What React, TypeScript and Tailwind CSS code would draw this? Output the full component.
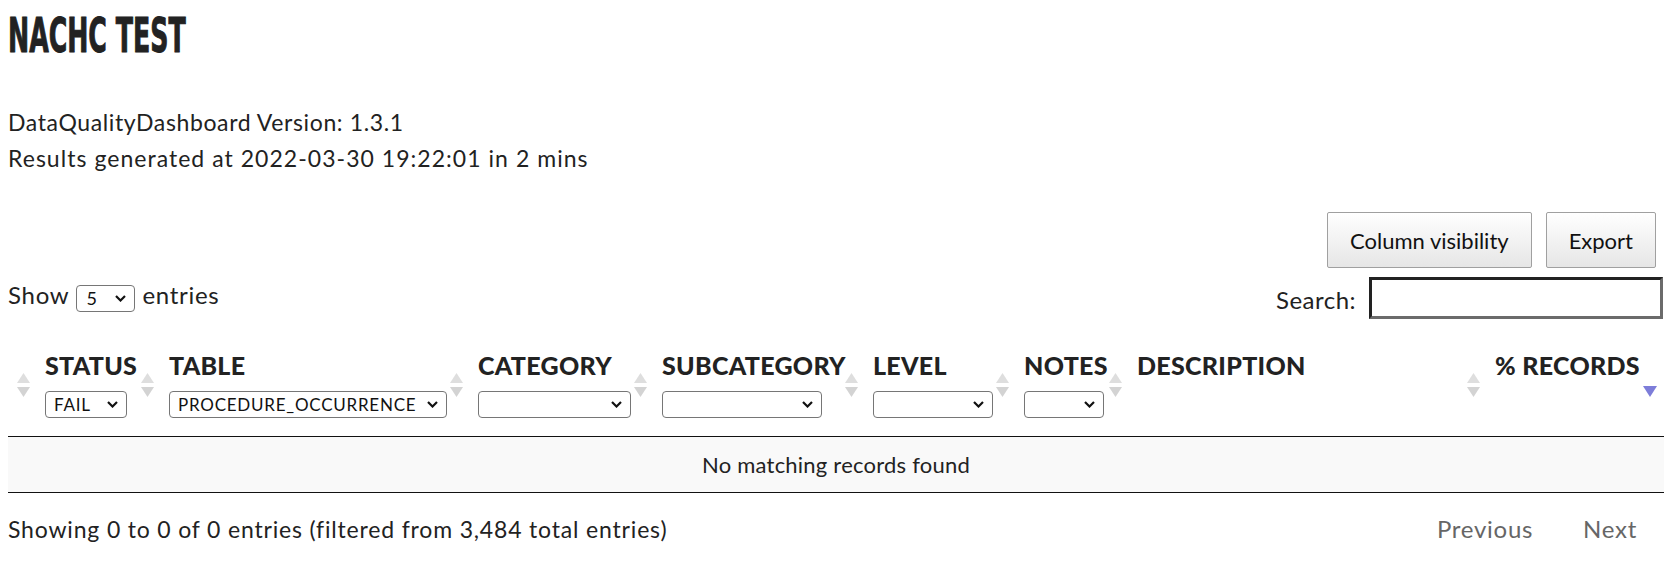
import React from 'react';

type Col = {
  key: string;
  cls: string;
  title?: string;
  select?: { cls: string; value?: string };
  sorted?: boolean;
};

const cols: Col[] = [
  { key: 'ctl', cls: 'w-[27px]' },
  { key: 'status', cls: 'w-[124px]', title: 'STATUS', select: { cls: 'w-[82px]', value: 'FAIL' } },
  { key: 'table', cls: 'w-[309px]', title: 'TABLE', select: { cls: 'w-[278px]', value: 'PROCEDURE_OCCURRENCE' } },
  { key: 'category', cls: 'w-[184px]', title: 'CATEGORY', select: { cls: 'w-[153px]' } },
  { key: 'subcategory', cls: 'w-[211px]', title: 'SUBCATEGORY', select: { cls: 'w-[160px]' } },
  { key: 'level', cls: 'w-[151px]', title: 'LEVEL', select: { cls: 'w-[120px]' } },
  { key: 'notes', cls: 'w-[113px]', title: 'NOTES', select: { cls: 'w-[80px]' } },
  { key: 'description', cls: 'w-[358px]', title: 'DESCRIPTION' },
  { key: 'records', cls: 'w-[179px]', title: '% RECORDS', sorted: true },
];

function SortBoth() {
  return (
    <svg width="13" height="24" viewBox="0 0 13 24" className="absolute right-[5px] top-[33px]">
      <path d="M6.5 0 L13 10 L0 10 Z" fill="#dedede" />
      <path d="M0 14 L13 14 L6.5 24 Z" fill="#d3d3d3" />
    </svg>
  );
}

function SortDesc() {
  return (
    <svg width="14" height="11" viewBox="0 0 14 11" className="absolute right-[7px] top-[46px]">
      <path d="M0 0 L14 0 L7 11 Z" fill="#7d7dd9" />
    </svg>
  );
}

function Chevron() {
  return (
    <svg width="11" height="7" viewBox="0 0 11 7" className="pointer-events-none absolute right-[9px] top-[10px]">
      <path d="M1 1 L5.5 5.5 L10 1" stroke="#111" strokeWidth="2.2" fill="none" />
    </svg>
  );
}

function FilterSelect({ cls, value }: { cls: string; value?: string }) {
  return (
    <div className={`relative ${cls}`}>
      <select
        defaultValue={value ?? ''}
        className="block h-[27px] w-full appearance-none rounded-[4px] border border-[#767676] bg-white pl-[8px] pr-[22px] text-[17px] font-normal leading-[25px] tracking-[0.045em] text-[#111]"
      >
        <option value="">{''}</option>
        {value && <option value={value}>{value}</option>}
      </select>
      <Chevron />
    </div>
  );
}

export default function App() {
  return (
    <div className="min-h-screen bg-white px-2 font-['Lato','Noto_Sans',sans-serif] text-[#222]">
      {/* Title */}
      <h1 className="pt-[11px]">
        <span className="inline-block h-[48px] origin-left scale-x-[0.585] whitespace-nowrap font-['Liberation_Sans_Narrow','DejaVu_Sans_Condensed','Liberation_Sans',sans-serif] text-[48px] font-bold leading-[48px] text-[#222] [-webkit-text-stroke:1px_#222]">
          NACHC TEST
        </span>
      </h1>

      {/* Meta */}
      <div className="mt-[45px] text-[23px] leading-[36px]">
        <div className="tracking-[0.027em]">DataQualityDashboard Version: 1.3.1</div>
        <div className="tracking-[0.045em]">Results generated at 2022-03-30 19:22:01 in 2 mins</div>
      </div>

      {/* Buttons */}
      <div className="mt-[36px] flex justify-end gap-[14px] pr-[8px]">
        <button className="h-[56px] rounded-[2px] border border-[#a0a0a0] bg-gradient-to-b from-white to-[#e6e6e6] px-[22px] text-[22px] text-[#111]">
          Column visibility
        </button>
        <button className="h-[56px] rounded-[2px] border border-[#a0a0a0] bg-gradient-to-b from-white to-[#e6e6e6] px-[22px] text-[22px] text-[#111]">
          Export
        </button>
      </div>

      {/* Length + search */}
      <div className="mt-[9px] flex items-start justify-between">
        <label className="flex items-center gap-[7px] pt-[6px] text-[24px] tracking-[0.03em]">
          <span className="-mt-[6px]">Show</span>
          <span className="relative w-[59px]">
            <select
              defaultValue="5"
              className="block h-[27px] w-full appearance-none rounded-[4px] border border-[#767676] bg-white pl-[9px] text-[18px] leading-[25px] text-[#111]"
            >
              <option value="5">5</option>
              <option value="10">10</option>
              <option value="25">25</option>
            </select>
            <Chevron />
          </span>
          <span className="-mt-[6px]">entries</span>
        </label>
        <label className="flex items-center gap-[13px] pr-[1px] text-[24px] tracking-[0.02em]">
          <span className="pt-[4px]">Search:</span>
          <input
            type="search"
            className="h-[42px] w-[294px] border-[3px] border-t-[#222] border-r-[#6b6b6b] border-b-[#6b6b6b] border-l-[#222] bg-white px-2 outline-none"
          />
        </label>
      </div>

      {/* Table */}
      <table className="mt-[21px] w-full table-fixed border-collapse">
        <thead>
          <tr className="border-b border-[#111]">
            {cols.map((c) => (
              <th key={c.key} className={`relative ${c.cls} ${c.title ? 'pl-[10px]' : ''} pb-[18px] pt-[10px] text-left align-top`}>
                {c.title && (
                  <div className="whitespace-nowrap text-[25px] font-black leading-[30px] tracking-[0.012em] text-[#222]">{c.title}</div>
                )}
                {c.select && (
                  <div className="mt-[11px]">
                    <FilterSelect cls={c.select.cls} value={c.select.value} />
                  </div>
                )}
                {c.sorted ? <SortDesc /> : <SortBoth />}
              </th>
            ))}
          </tr>
        </thead>
        <tbody>
          <tr className="border-b border-[#111] bg-[#f9f9f9]">
            <td colSpan={cols.length} className="h-[56px] text-center text-[22px] tracking-[0.01em] text-[#222]">
              No matching records found
            </td>
          </tr>
        </tbody>
      </table>

      {/* Footer */}
      <div className="mt-[21px] flex items-center justify-between text-[23px] leading-[30px]">
        <div className="tracking-[0.036em]">Showing 0 to 0 of 0 entries (filtered from 3,484 total entries)</div>
        <div className="flex gap-[50px] pr-[27px] text-[24px] tracking-[0.03em] text-[#666]">
          <span>Previous</span>
          <span>Next</span>
        </div>
      </div>
    </div>
  );
}
